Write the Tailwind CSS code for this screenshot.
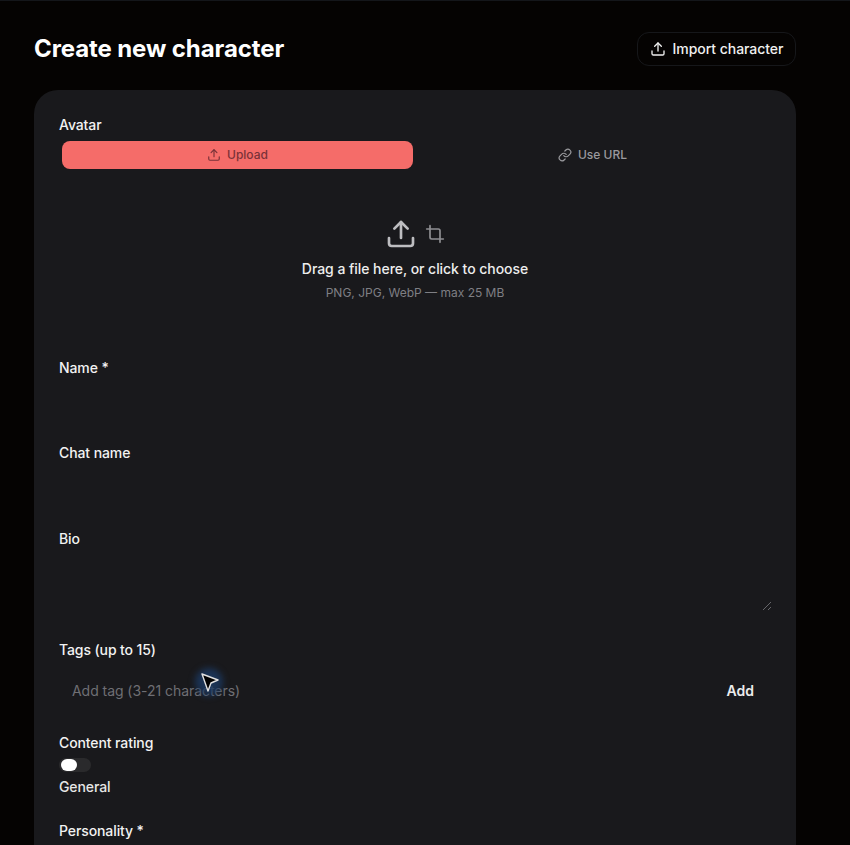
<!DOCTYPE html>
<html lang="en">
<head>
  <meta charset="UTF-8">
  <title>Create new character</title>
  <script src="https://cdn.jsdelivr.net/npm/@tailwindcss/browser@4"></script>
</head>
<body class="bg-[#050302] font-['Inter',sans-serif] text-white">
  <div class="relative h-[845px] w-[850px] overflow-hidden border-t border-[#14161a]">
    <div class="w-[762px] ml-[34px]">
      <!-- header -->
      <div class="flex items-center justify-between h-[89px] pt-[7px]">
        <h1 class="text-2xl font-bold leading-8 tracking-[-0.1px]">Create new character</h1>
        <button class="flex items-center gap-[7px] h-[34px] w-[159px] justify-center rounded-[12px] border border-[#16171a] text-sm font-medium tracking-[-0.05px] text-[#f0f0f0]">
          <svg class="w-4 h-4" viewBox="0 0 24 24" fill="none" stroke="currentColor" stroke-width="2" stroke-linecap="round" stroke-linejoin="round"><path d="M21 15v4a2 2 0 0 1-2 2H5a2 2 0 0 1-2-2v-4"/><path d="M17 8l-5-5-5 5"/><path d="M12 3v12"/></svg>
          Import character
        </button>
      </div>

      <!-- form card -->
      <div class="w-[762px] h-[800px] rounded-t-[24px] bg-[#19191c] px-[25px] pt-[25px]">
        <div class="text-sm font-medium leading-5 tracking-[-0.1px] text-[#f2f2f2]">Avatar</div>
        <div class="flex gap-1 mt-[6px] px-[3px]">
          <div class="flex flex-1 h-7 items-center justify-center gap-[6px] rounded-[8px] bg-[#f56c69] text-xs font-medium text-[#7a3238]">
            <svg class="w-[14px] h-[14px]" viewBox="0 0 24 24" fill="none" stroke="currentColor" stroke-width="2" stroke-linecap="round" stroke-linejoin="round"><path d="M21 15v4a2 2 0 0 1-2 2H5a2 2 0 0 1-2-2v-4"/><path d="M17 8l-5-5-5 5"/><path d="M12 3v12"/></svg>
            Upload
          </div>
          <div class="flex flex-1 h-7 items-center justify-center gap-[6px] text-xs font-medium text-[#9a9a9e]">
            <svg class="w-[14px] h-[14px]" viewBox="0 0 24 24" fill="none" stroke="currentColor" stroke-width="2" stroke-linecap="round" stroke-linejoin="round"><path d="M10 13a5 5 0 0 0 7.54.54l3-3a5 5 0 0 0-7.07-7.07l-1.72 1.71"/><path d="M14 11a5 5 0 0 0-7.54-.54l-3 3a5 5 0 0 0 7.07 7.07l1.71-1.71"/></svg>
            Use URL
          </div>
        </div>

        <!-- dropzone -->
        <div class="flex flex-col items-center h-[189px] pt-[48px]">
          <div class="flex items-center gap-[8px] h-[34px] pr-[1px]">
            <svg class="w-8 h-8 text-[#bdbdc0]" viewBox="0 0 24 24" fill="none" stroke="currentColor" stroke-width="2" stroke-linecap="round" stroke-linejoin="round"><path d="M21 15v4a2 2 0 0 1-2 2H5a2 2 0 0 1-2-2v-4"/><path d="M17 8l-5-5-5 5"/><path d="M12 3v12"/></svg>
            <svg class="w-5 h-5 text-[#8f8f93]" viewBox="0 0 24 24" fill="none" stroke="currentColor" stroke-width="2" stroke-linecap="round" stroke-linejoin="round"><path d="M6 2v14a2 2 0 0 0 2 2h14"/><path d="M18 22V8a2 2 0 0 0-2-2H2"/></svg>
          </div>
          <div class="mt-[8px] text-sm font-medium leading-5 tracking-[-0.05px] text-[#ededed]">Drag a file here, or click to choose</div>
          <div class="mt-[4px] text-xs leading-5 text-[#7f7f84]">PNG, JPG, WebP — max 25 MB</div>
        </div>

        <div class="text-sm font-medium leading-5 tracking-[-0.1px] text-[#f2f2f2]">Name *</div>
        <div class="h-[65px]"></div>
        <div class="text-sm font-medium leading-5 tracking-[-0.1px] text-[#f2f2f2]">Chat name</div>
        <div class="h-[66px]"></div>
        <div class="text-sm font-medium leading-5 tracking-[-0.1px] text-[#f2f2f2]">Bio</div>

        <!-- bio textarea -->
        <div class="relative h-[91px]">
          <svg class="absolute right-[-1px] bottom-[29px] w-[10px] h-[10px] text-[#66666a]" viewBox="0 0 10 10" fill="none" stroke="currentColor" stroke-width="1"><path d="M1 9L9 1"/><path d="M6 9L9 6"/></svg>
        </div>

        <div class="text-sm font-medium leading-5 tracking-[-0.1px] text-[#f2f2f2]">Tags (up to 15)</div>
        <div class="flex items-center justify-between h-[56px] pl-[13px] pr-[17px] pt-[5px]">
          <span class="text-sm tracking-[-0.05px] text-[#6f6f74]">Add tag (3-21 characters)</span>
          <span class="text-sm font-semibold text-[#ececec]">Add</span>
        </div>

        <div class="mt-[17px] text-sm font-medium leading-5 tracking-[-0.1px] text-[#f2f2f2]">Content rating</div>
        <div class="flex items-center w-8 h-[14px] mt-[5px] rounded-full bg-[#2a2a2c] px-[2px]">
          <div class="w-4 h-3 rounded-full bg-white"></div>
        </div>
        <div class="mt-[5px] text-sm font-medium leading-5 tracking-[-0.1px] text-[#e6e6e6]">General</div>
        <div class="mt-[24px] text-sm font-medium leading-5 tracking-[-0.1px] text-[#f2f2f2]">Personality *</div>
      </div>
    </div>

    <!-- mouse pointer over the form -->
    <div class="absolute left-[195px] top-[667px] w-7 h-7 rounded-full bg-[#1b3a63]/80 blur-[3px]"></div>
    <svg class="absolute left-[200px] top-[671px] w-5 h-5" viewBox="0 0 20 20"><path d="M2 2L18 8L11 11L8 19Z" fill="#000" stroke="#e0e0e0" stroke-width="1.4" stroke-linejoin="round"/></svg>
  </div>
</body>
</html>
